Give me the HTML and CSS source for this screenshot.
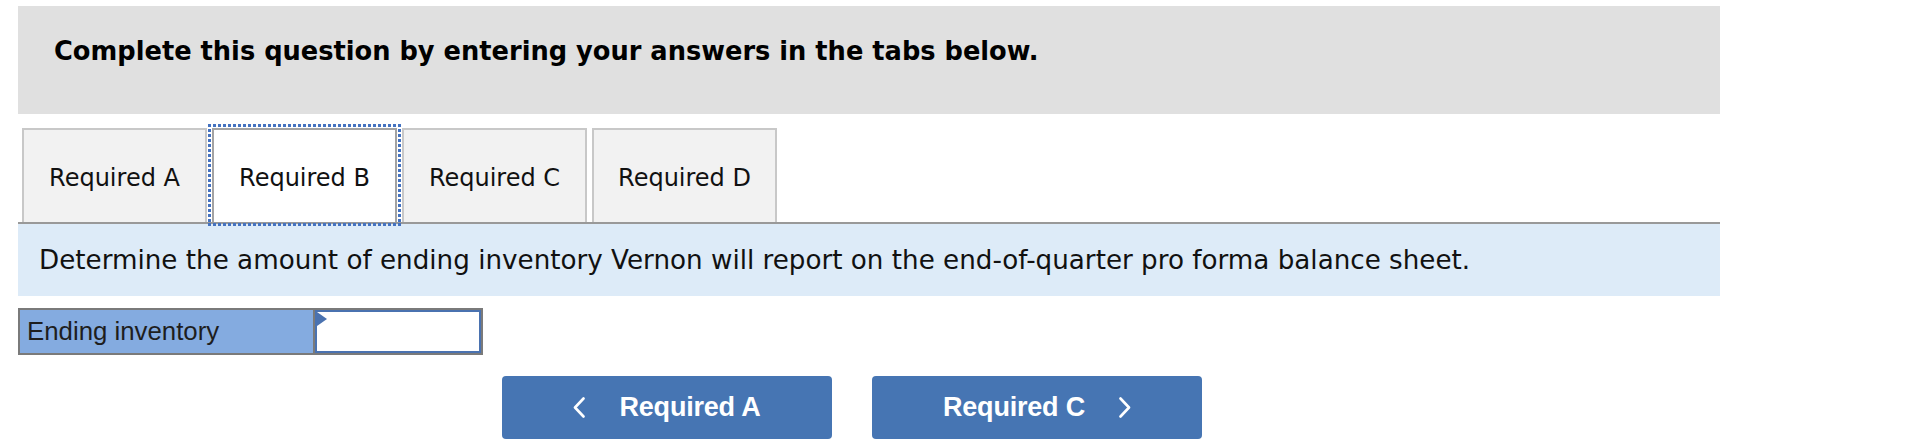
FILE: index.html
```html
<!DOCTYPE html>
<html lang="en">
<head>
<meta charset="utf-8">
<title>Required B</title>
<link rel="stylesheet" href="styles.css">
</head>
<body>
<div class="page">
  <div class="prompt">
    <h2 class="prompt-title">Complete this question by entering your answers in the tabs below.</h2>
  </div>
  <div class="tabs">
    <div class="tab">Required A</div>
    <div class="tab tab-active">Required B</div>
    <div class="tab">Required C</div>
    <div class="tab">Required D</div>
  </div>
  <div class="instructions">Determine the amount of ending inventory Vernon will report on the end-of-quarter pro forma balance sheet.</div>
  <div class="answer">
    <div class="answer-label">Ending inventory</div>
    <div class="answer-input"><span class="flag"></span></div>
  </div>
  <div class="nav">
    <button class="nav-btn" type="button">
      <svg class="chev" width="12" height="21" viewBox="0 0 12 21"><polyline points="10.5,1.5 2,10.5 10.5,19.5" fill="none" stroke="#fff" stroke-width="2.6" stroke-linecap="round" stroke-linejoin="round"/></svg>
      <span>Required A</span>
    </button>
    <button class="nav-btn" type="button">
      <span>Required C</span>
      <svg class="chev" width="12" height="21" viewBox="0 0 12 21"><polyline points="1.5,1.5 10,10.5 1.5,19.5" fill="none" stroke="#fff" stroke-width="2.6" stroke-linecap="round" stroke-linejoin="round"/></svg>
    </button>
  </div>
</div>
</body>
</html>
```

FILE: styles.css
```css
html, body {
  margin: 0;
  padding: 0;
  background: #ffffff;
}

body {
  font-family: "DejaVu Sans", Verdana, sans-serif;
  color: #111111;
}

.page {
  padding: 6px 0 0 18px;
  width: 1702px;
}

.prompt {
  background: #e0e0e0;
  height: 108px;
  box-sizing: border-box;
  padding: 30px 0 0 36px;
}

.prompt-title {
  margin: 0;
  font-size: 25.7px;
  font-weight: bold;
  line-height: 30px;
  color: #000000;
}

.tabs {
  margin-top: 14px;
  display: flex;
  gap: 5px;
  padding-left: 4px;
  border-bottom: 2px solid #999999;
}

.tab {
  width: 185px;
  height: 94px;
  box-sizing: border-box;
  border: 2px solid #c8c8c8;
  border-bottom: none;
  background: #f2f2f2;
  display: flex;
  align-items: center;
  justify-content: center;
  font-size: 24px;
  color: #111111;
  padding-top: 4px;
}

.tab-active {
  position: relative;
  background: #ffffff;
  border-color: #a3a3a3;
}

.tab-active::before {
  content: "";
  position: absolute;
  top: -6px;
  left: -6px;
  right: -6px;
  bottom: -4px;
  pointer-events: none;
  background:
    repeating-linear-gradient(90deg, #4472c0 0 3px, transparent 3px 5px) top left / 100% 3px no-repeat,
    repeating-linear-gradient(90deg, #4472c0 0 3px, transparent 3px 5px) bottom left / 100% 3px no-repeat,
    repeating-linear-gradient(180deg, #4472c0 0 3px, transparent 3px 5px) top left / 3px 100% no-repeat,
    repeating-linear-gradient(180deg, #4472c0 0 3px, transparent 3px 5px) top right / 3px 100% no-repeat;
}

.instructions {
  background: #ddebf8;
  height: 72px;
  box-sizing: border-box;
  padding-left: 21px;
  display: flex;
  align-items: center;
  font-size: 26.2px;
  color: #111111;
}

.answer {
  margin-top: 12px;
  width: 465px;
  height: 47px;
  box-sizing: border-box;
  border: 2px solid #7a7a7a;
  display: flex;
}

.answer-label {
  width: 295px;
  box-sizing: border-box;
  background: #84abe0;
  border-right: 2px solid #7a7a7a;
  padding-left: 7px;
  display: flex;
  align-items: center;
  font-family: "Liberation Sans", Arial, sans-serif;
  font-size: 25.8px;
  color: #1e1e1e;
}

.answer-input {
  flex: 1;
  position: relative;
  background: #ffffff;
  border: 2px solid #4a72b0;
}

.flag {
  position: absolute;
  left: 0;
  top: 0;
  width: 0;
  height: 0;
  border-top: 7px solid transparent;
  border-bottom: 7px solid transparent;
  border-left: 10px solid #4a72b0;
}

.nav {
  margin-top: 21px;
  padding-left: 484px;
  display: flex;
  gap: 40px;
}

.nav-btn {
  width: 330px;
  height: 63px;
  border: none;
  border-radius: 4px;
  background: #4675b3;
  color: #ffffff;
  font-family: "Liberation Sans", Arial, sans-serif;
  font-weight: bold;
  font-size: 27px;
  letter-spacing: -0.2px;
  display: flex;
  align-items: center;
  justify-content: center;
  gap: 34px;
  padding: 0;
}

.chev {
  display: block;
}
```
